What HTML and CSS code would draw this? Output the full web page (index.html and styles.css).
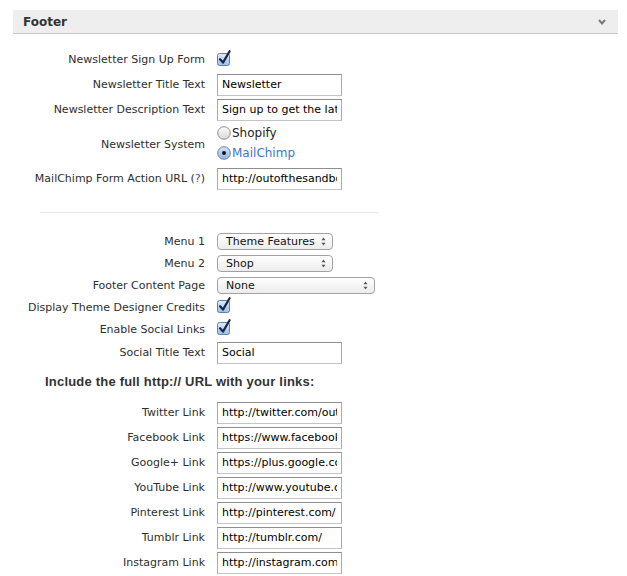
FILE: index.html
```html
<!DOCTYPE html>
<html>
<head>
<meta charset="utf-8">
<link rel="stylesheet" href="styles.css">
</head>
<body>
<div class="panel-head">
  <span class="panel-title">Footer</span>
  <svg class="chev" width="8" height="6" viewBox="0 0 8 6"><polyline points="1,1 4,4.5 7,1" fill="none" stroke="#7a7a7a" stroke-width="2"/></svg>
</div>

<div class="section first">
  <div class="row">
    <label class="lbl">Newsletter Sign Up Form</label>
    <span class="ctl"><svg class="cb" width="16" height="16" viewBox="0 0 16 16"><defs><linearGradient id="cbg" x1="0" y1="0" x2="0" y2="1"><stop offset="0" stop-color="#e2edf9"/><stop offset="1" stop-color="#9dbde6"/></linearGradient></defs><rect x="0.5" y="3.5" width="12" height="12" rx="2" fill="url(#cbg)" stroke="#5f7fac"/><path d="M3 9.2 L6 12.6 L12.6 1.2" fill="none" stroke="#18264a" stroke-width="2.2" stroke-linecap="round" stroke-linejoin="round"/></svg></span>
  </div>
  <div class="row">
    <label class="lbl">Newsletter Title Text</label>
    <span class="ctl"><input class="txt" type="text" value="Newsletter"></span>
  </div>
  <div class="row">
    <label class="lbl">Newsletter Description Text</label>
    <span class="ctl"><input class="txt" type="text" value="Sign up to get the latest news"></span>
  </div>
  <div class="row system">
    <label class="lbl">Newsletter System</label>
    <span class="ctl radios">
      <span class="radio"><svg width="14" height="14" viewBox="0 0 14 14"><defs><linearGradient id="rg1" x1="0" y1="0" x2="0" y2="1"><stop offset="0" stop-color="#ffffff"/><stop offset="1" stop-color="#d6d6d6"/></linearGradient></defs><circle cx="7" cy="7" r="6.3" fill="url(#rg1)" stroke="#8e8e8e"/></svg><span class="rtext">Shopify</span></span>
      <span class="radio on"><svg width="14" height="14" viewBox="0 0 14 14"><defs><linearGradient id="rg2" x1="0" y1="0" x2="0" y2="1"><stop offset="0" stop-color="#d7e5f6"/><stop offset="1" stop-color="#8fb2df"/></linearGradient></defs><circle cx="7" cy="7" r="6.3" fill="url(#rg2)" stroke="#6784ad"/><circle cx="7" cy="7" r="2" fill="#151515"/></svg><span class="rtext">MailChimp</span></span>
    </span>
  </div>
  <div class="row">
    <label class="lbl">MailChimp Form Action URL (<a class="help">?</a>)</label>
    <span class="ctl"><input class="txt" type="text" value="http://outofthesandbox.us"></span>
  </div>
</div>

<div class="divider"></div>

<div class="section second">
  <div class="row short">
    <label class="lbl">Menu 1</label>
    <span class="ctl"><span class="sel"><span class="seltext">Theme Features</span><svg class="arr" width="5" height="9" viewBox="0 0 5 9"><path d="M2.5 0.5 L4.5 3.3 L0.5 3.3 Z M2.5 8.5 L4.5 5.7 L0.5 5.7 Z" fill="#555"/></svg></span></span>
  </div>
  <div class="row short">
    <label class="lbl">Menu 2</label>
    <span class="ctl"><span class="sel"><span class="seltext">Shop</span><svg class="arr" width="5" height="9" viewBox="0 0 5 9"><path d="M2.5 0.5 L4.5 3.3 L0.5 3.3 Z M2.5 8.5 L4.5 5.7 L0.5 5.7 Z" fill="#555"/></svg></span></span>
  </div>
  <div class="row short">
    <label class="lbl">Footer Content Page</label>
    <span class="ctl"><span class="sel wide"><span class="seltext">None</span><svg class="arr" width="5" height="9" viewBox="0 0 5 9"><path d="M2.5 0.5 L4.5 3.3 L0.5 3.3 Z M2.5 8.5 L4.5 5.7 L0.5 5.7 Z" fill="#555"/></svg></span></span>
  </div>
  <div class="row short">
    <label class="lbl">Display Theme Designer Credits</label>
    <span class="ctl"><svg class="cb" width="16" height="16" viewBox="0 0 16 16"><rect x="0.5" y="3.5" width="12" height="12" rx="2" fill="url(#cbg)" stroke="#5f7fac"/><path d="M3 9.2 L6 12.6 L12.6 1.2" fill="none" stroke="#18264a" stroke-width="2.2" stroke-linecap="round" stroke-linejoin="round"/></svg></span>
  </div>
  <div class="row short">
    <label class="lbl">Enable Social Links</label>
    <span class="ctl"><svg class="cb" width="16" height="16" viewBox="0 0 16 16"><rect x="0.5" y="3.5" width="12" height="12" rx="2" fill="url(#cbg)" stroke="#5f7fac"/><path d="M3 9.2 L6 12.6 L12.6 1.2" fill="none" stroke="#18264a" stroke-width="2.2" stroke-linecap="round" stroke-linejoin="round"/></svg></span>
  </div>
  <div class="row">
    <label class="lbl">Social Title Text</label>
    <span class="ctl"><input class="txt" type="text" value="Social"></span>
  </div>
</div>

<h3 class="note">Include the full http:// URL with your links:</h3>

<div class="section third">
  <div class="row">
    <label class="lbl">Twitter Link</label>
    <span class="ctl"><input class="txt" type="text" value="http://twitter.com/outofthesandbox"></span>
  </div>
  <div class="row">
    <label class="lbl">Facebook Link</label>
    <span class="ctl"><input class="txt" type="text" value="https://www.facebook.com/outofthesandbox"></span>
  </div>
  <div class="row">
    <label class="lbl">Google+ Link</label>
    <span class="ctl"><input class="txt" type="text" value="https://plus.google.com/"></span>
  </div>
  <div class="row">
    <label class="lbl">YouTube Link</label>
    <span class="ctl"><input class="txt" type="text" value="http://www.youtube.com/"></span>
  </div>
  <div class="row">
    <label class="lbl">Pinterest Link</label>
    <span class="ctl"><input class="txt" type="text" value="http://pinterest.com/"></span>
  </div>
  <div class="row">
    <label class="lbl">Tumblr Link</label>
    <span class="ctl"><input class="txt" type="text" value="http://tumblr.com/"></span>
  </div>
  <div class="row">
    <label class="lbl">Instagram Link</label>
    <span class="ctl"><input class="txt" type="text" value="http://instagram.com/"></span>
  </div>
</div>
</body>
</html>
```

FILE: styles.css
```css
html, body {
  margin: 0;
  padding: 0;
  background: #fff;
}
body {
  font-family: "DejaVu Sans", Verdana, sans-serif;
  font-size: 11px;
  color: #333;
  width: 627px;
  height: 576px;
  overflow: hidden;
}
.panel-head {
  margin: 10px 9px 0 13px;
  height: 23px;
  background: #eeeeee;
  border-bottom: 1px solid #c8c8c8;
  display: flex;
  align-items: center;
  justify-content: space-between;
  padding: 0 12px 0 10px;
}
.panel-title {
  font-weight: bold;
  font-size: 12px;
  color: #333;
}
.chev {
  display: block;
  margin-top: 1px;
}
.section.first {
  margin-top: 13px;
}
.row {
  display: grid;
  grid-template-columns: 205px 1fr;
  column-gap: 12px;
  align-items: center;
  height: 25px;
}
.row.short {
  height: 22px;
}
.row.system {
  height: 44px;
}
.lbl {
  text-align: right;
  color: #2e2e2e;
  white-space: nowrap;
}
.help {
  color: #2d5c9e;
}
.ctl {
  display: flex;
  align-items: center;
}
.cb {
  display: block;
  margin-top: -4px;
}
.txt {
  box-sizing: border-box;
  width: 125px;
  height: 22px;
  margin: 0;
  padding: 0 4px;
  border: 1px solid #c4c4c4;
  border-top-color: #8e8e8e;
  border-left-color: #aaa;
  border-right-color: #aaa;
  font-family: "DejaVu Sans", Verdana, sans-serif;
  font-size: 11px;
  color: #000;
  background: #fff;
  outline: none;
}
.radios {
  flex-direction: column;
  align-items: flex-start;
  align-self: start;
  padding-top: 1px;
}
.radio {
  display: flex;
  align-items: center;
  height: 20px;
}
.radio svg {
  display: block;
  margin-right: 1px;
}
.rtext {
  font-size: 12px;
  color: #222;
}
.radio.on .rtext {
  color: #3b78c6;
}
.divider {
  margin: 21px 0 17px 40px;
  width: 338px;
  height: 1px;
  background: #e8e8e8;
}
.sel {
  box-sizing: border-box;
  width: 116px;
  height: 17px;
  border: 1px solid #a2a2a2;
  border-radius: 4px;
  background: linear-gradient(#ffffff, #ececec);
  display: flex;
  align-items: center;
  justify-content: space-between;
  padding: 0 6px 0 8px;
  color: #111;
}
.sel.wide {
  width: 158px;
}
.arr {
  display: block;
}
.note {
  margin: 7px 0 8px 45px;
  height: 20px;
  line-height: 20px;
  font-family: "Liberation Sans", Arial, sans-serif;
  font-size: 13px;
  letter-spacing: 0.2px;
  font-weight: bold;
  color: #333;
}
```
